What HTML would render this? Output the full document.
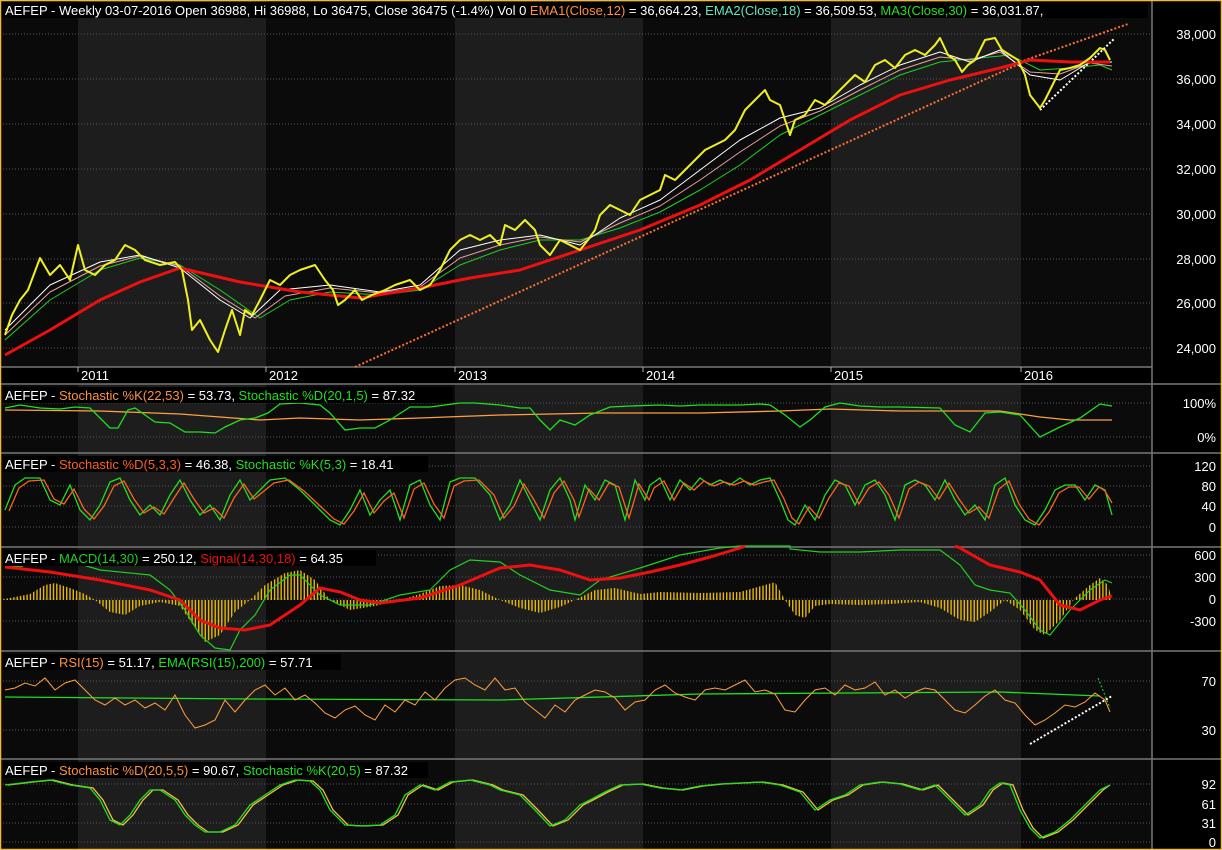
<!DOCTYPE html>
<html><head><meta charset="utf-8"><style>
html,body{margin:0;padding:0;background:#000;}
svg{display:block;font-family:"Liberation Sans",sans-serif;}
</style></head><body>
<svg width="1222" height="850" viewBox="0 0 1222 850" xmlns="http://www.w3.org/2000/svg">
<defs>
<pattern id="st" width="3.3" height="10" patternUnits="userSpaceOnUse"><rect x="0" y="0" width="1.4" height="10" fill="#e8b800"/></pattern>
<clipPath id="hc"><polygon points="0,600 10,598 30,594 45,585 55,583 70,588 85,594 95,600 110,612 125,615 140,606 160,602 180,606 195,628 205,642 220,635 235,612 250,600 265,585 285,573 300,570 315,580 330,600 350,610 375,606 400,600 420,594 440,586 460,585 480,590 500,600 520,608 540,613 560,607 575,600 595,590 615,588 640,594 660,592 700,593 740,592 765,585 775,582 785,600 795,615 805,618 815,606 830,604 860,605 890,604 920,602 940,608 960,620 975,622 990,612 1005,600 1020,610 1035,630 1045,635 1060,620 1075,598 1090,585 1100,578 1108,585 1112,600"/></clipPath>
</defs>
<rect width="1222" height="850" fill="#000"/>
<!-- year bands -->
<g>
<rect x="0" y="0" width="78" height="850" fill="#0a0a0a"/>
<rect x="78" y="0" width="188" height="850" fill="#1d1d1d"/>
<rect x="266" y="0" width="189" height="850" fill="#0b0b0b"/>
<rect x="455" y="0" width="188" height="850" fill="#1d1d1d"/>
<rect x="643" y="0" width="188" height="850" fill="#0b0b0b"/>
<rect x="831" y="0" width="190" height="850" fill="#1d1d1d"/>
<rect x="1021" y="0" width="131" height="850" fill="#0b0b0b"/>
<rect x="1152" y="0" width="70" height="850" fill="#000"/>
</g>
<!-- time axis row -->
<rect x="0" y="367" width="1152" height="17" fill="#000"/>
<!-- separators -->
<g stroke="#777" stroke-width="1.5">
<line x1="0" y1="367" x2="1152" y2="367"/>
<line x1="0" y1="384" x2="1222" y2="384"/>
<line x1="0" y1="453" x2="1222" y2="453"/>
<line x1="0" y1="547" x2="1222" y2="547"/>
<line x1="0" y1="651" x2="1222" y2="651"/>
<line x1="0" y1="759" x2="1222" y2="759"/>
<line x1="1152" y1="0" x2="1152" y2="850"/>
</g>
<!-- grid -->
<g stroke="#555" stroke-width="1" stroke-dasharray="1 2">
<line x1="0" y1="34" x2="1152" y2="34"/><line x1="0" y1="79" x2="1152" y2="79"/><line x1="0" y1="124" x2="1152" y2="124"/><line x1="0" y1="169" x2="1152" y2="169"/><line x1="0" y1="214" x2="1152" y2="214"/><line x1="0" y1="259" x2="1152" y2="259"/><line x1="0" y1="303" x2="1152" y2="303"/><line x1="0" y1="348" x2="1152" y2="348"/>
<line x1="0" y1="403" x2="1152" y2="403"/><line x1="0" y1="437" x2="1152" y2="437"/>
<line x1="0" y1="466" x2="1152" y2="466"/><line x1="0" y1="486" x2="1152" y2="486"/><line x1="0" y1="506" x2="1152" y2="506"/><line x1="0" y1="527" x2="1152" y2="527"/>
<line x1="0" y1="555" x2="1152" y2="555"/><line x1="0" y1="577" x2="1152" y2="577"/><line x1="0" y1="599" x2="1152" y2="599"/><line x1="0" y1="621" x2="1152" y2="621"/>
<line x1="0" y1="681" x2="1152" y2="681"/><line x1="0" y1="730" x2="1152" y2="730"/>
<line x1="0" y1="784" x2="1152" y2="784"/><line x1="0" y1="804" x2="1152" y2="804"/><line x1="0" y1="823" x2="1152" y2="823"/><line x1="0" y1="842" x2="1152" y2="842"/>
</g>
<!-- right axis labels -->
<g fill="#fff" font-size="13" text-anchor="end">
<text x="1216" y="39">38,000</text><text x="1216" y="84">36,000</text><text x="1216" y="129">34,000</text><text x="1216" y="174">32,000</text><text x="1216" y="219">30,000</text><text x="1216" y="264">28,000</text><text x="1216" y="308">26,000</text><text x="1216" y="353">24,000</text>
<text x="1216" y="408">100%</text><text x="1216" y="442">0%</text>
<text x="1216" y="471">120</text><text x="1216" y="491">80</text><text x="1216" y="511">40</text><text x="1216" y="532">0</text>
<text x="1216" y="560">600</text><text x="1216" y="582">300</text><text x="1216" y="604">0</text><text x="1216" y="626">-300</text>
<text x="1216" y="686">70</text><text x="1216" y="735">30</text>
<text x="1216" y="789">92</text><text x="1216" y="809">61</text><text x="1216" y="828">31</text><text x="1216" y="847">0</text>
</g>
<!-- year labels -->
<g fill="#fff" font-size="13">
<line x1="78" y1="367" x2="78" y2="372" stroke="#aaa"/><text x="81" y="380">2011</text>
<line x1="266" y1="367" x2="266" y2="372" stroke="#aaa"/><text x="269" y="380">2012</text>
<line x1="455" y1="367" x2="455" y2="372" stroke="#aaa"/><text x="458" y="380">2013</text>
<line x1="643" y1="367" x2="643" y2="372" stroke="#aaa"/><text x="646" y="380">2014</text>
<line x1="831" y1="367" x2="831" y2="372" stroke="#aaa"/><text x="834" y="380">2015</text>
<line x1="1021" y1="367" x2="1021" y2="372" stroke="#aaa"/><text x="1024" y="380">2016</text>
</g>
<!-- MAIN CHART -->
<g fill="none" stroke-linejoin="round">
<line x1="355" y1="367" x2="1032" y2="58" stroke="#ff7030" stroke-width="2" stroke-dasharray="2 2"/>
<line x1="1020" y1="62" x2="1128" y2="24" stroke="#ff7030" stroke-width="2" stroke-dasharray="2 2"/>
<line x1="1040" y1="110" x2="1115" y2="38" stroke="#fff" stroke-width="2" stroke-dasharray="2 2"/>
<polyline stroke="#20d020" stroke-width="1" points="5,340 50,300 100,270 140,258 180,265 220,290 260,318 290,300 330,292 380,295 420,290 460,265 500,250 540,240 580,240 620,228 660,212 700,190 740,165 780,135 820,115 860,95 900,75 940,62 980,58 1010,55 1040,70 1070,68 1100,65 1112,70"/>
<polyline stroke="#e8a0a0" stroke-width="1" points="5,335 50,292 100,266 140,256 180,266 220,296 255,318 285,296 330,288 380,293 420,287 460,258 500,245 540,237 580,242 620,223 660,206 700,180 740,152 780,126 820,111 860,90 900,70 940,57 970,60 1000,52 1030,72 1060,74 1090,63 1112,66"/>
<polyline stroke="#ffffff" stroke-width="1" points="5,330 50,285 100,262 140,255 180,268 220,300 250,318 280,290 330,285 380,292 420,285 460,250 500,240 540,235 580,245 620,218 660,200 700,170 740,140 780,118 820,108 860,85 900,65 940,52 970,62 1000,50 1030,75 1060,80 1090,62 1112,62"/>
<polyline stroke="#ee1010" stroke-width="3" points="5,355 50,330 100,300 140,282 180,268 240,282 300,292 360,298 420,288 470,278 520,270 580,250 640,230 700,205 750,180 800,150 850,120 900,95 950,80 1000,68 1030,60 1070,62 1110,62"/>
<polyline stroke="#f0f020" stroke-width="2" points="5,335 12,315 20,300 28,290 40,258 50,275 60,265 70,280 78,245 85,270 95,275 105,265 115,260 125,245 135,250 145,260 160,265 175,262 182,270 188,300 192,330 200,320 210,340 218,352 225,330 232,310 240,335 245,310 252,315 260,300 270,280 280,285 290,275 300,270 315,265 325,280 333,290 338,305 345,300 355,290 362,300 372,295 385,290 395,285 410,280 420,290 430,285 440,270 450,250 460,240 470,235 480,240 490,235 500,245 505,225 515,230 525,220 535,230 540,245 550,255 560,240 570,245 580,250 588,240 595,230 600,215 610,205 620,210 630,215 640,200 650,195 660,190 665,175 675,180 685,170 695,160 705,150 715,145 725,140 735,130 745,110 755,100 765,90 770,100 780,105 790,135 795,120 805,115 815,100 825,105 835,95 845,85 855,75 865,82 875,65 885,60 895,68 905,55 915,50 925,55 935,45 940,38 948,55 955,60 962,72 968,65 975,60 985,40 995,38 1002,50 1010,55 1018,60 1025,75 1030,95 1040,108 1045,100 1050,90 1060,70 1070,68 1080,65 1090,58 1100,48 1105,50 1110,60"/>
</g>
<!-- PANEL 1 -->
<g fill="none" stroke-width="1.3">
<polyline stroke="#ffa040" points="5,410 100,411 180,414 260,420 300,418 360,420 420,418 500,415 600,413 700,413 780,411 830,409 900,411 1000,411 1040,417 1070,420 1112,420"/>
<polyline stroke="#20e020" points="5,408 20,405 40,408 60,409 75,407 90,408 100,418 110,428 118,428 128,410 135,408 145,415 155,422 170,423 185,432 200,432 215,433 225,427 240,420 255,418 268,413 280,404 300,403 320,405 330,413 345,430 360,428 375,428 390,420 410,407 430,407 445,405 460,403 475,403 500,405 520,408 530,408 540,420 550,430 560,420 575,425 590,415 610,407 630,406 660,405 680,406 700,405 740,405 760,404 770,405 785,415 800,427 810,420 825,407 840,403 860,406 880,407 900,407 940,408 955,425 970,432 985,413 1000,412 1020,415 1040,437 1060,427 1080,418 1100,404 1112,406"/>
</g>
<!-- PANEL 2 -->
<g fill="none" stroke-width="1.3">
<polyline id="p2" stroke="#20e020" points="5,510 15,485 25,478 40,478 50,500 60,505 70,485 80,510 90,520 100,505 110,482 120,478 130,500 140,515 150,505 160,515 170,495 180,480 190,500 200,515 210,505 220,520 230,495 240,480 250,500 260,490 270,480 285,478 300,490 315,505 330,520 340,525 350,510 360,490 370,515 380,500 390,490 400,520 410,485 420,480 430,505 440,520 450,482 460,478 475,478 490,495 500,520 510,505 520,480 530,500 540,520 550,490 560,478 570,500 575,520 585,485 595,500 605,480 615,485 625,520 635,480 645,500 650,485 660,478 670,500 680,480 690,490 700,478 710,485 720,480 730,485 740,478 750,485 760,480 770,478 780,500 788,520 795,525 805,505 815,520 825,495 835,480 845,485 855,505 865,485 875,480 885,495 895,520 905,485 915,480 925,485 935,500 945,480 955,500 965,515 975,505 985,520 995,485 1005,478 1015,505 1025,520 1035,525 1045,510 1055,490 1065,485 1075,485 1085,500 1095,485 1105,490 1112,515"/>
<polyline stroke="#ff6020" transform="translate(4,1)" points="5,510 15,487 25,480 40,479 50,498 60,503 70,488 80,508 90,518 100,505 110,485 120,480 130,498 140,512 150,506 160,513 170,497 180,482 190,498 200,512 210,507 220,517 230,497 240,483 250,498 260,490 270,482 285,479 300,490 315,504 330,518 340,523 350,510 360,492 370,512 380,500 390,492 400,517 410,488 420,482 430,503 440,517 450,485 460,480 475,479 490,494 500,517 510,505 520,483 530,499 540,517 550,492 560,480 570,499 575,516 585,488 595,499 605,482 615,486 625,517 635,483 645,499 650,487 660,480 670,499 680,482 690,489 700,480 710,485 720,481 730,484 740,480 750,484 760,481 770,479 780,498 788,517 795,523 805,506 815,517 825,497 835,482 845,485 855,503 865,487 875,481 885,494 895,517 905,488 915,481 925,485 935,498 945,482 955,498 965,512 975,506 985,517 995,488 1005,480 1015,503 1025,518 1035,524 1045,511 1055,492 1065,486 1075,486 1085,498 1095,486 1101,490 1108,502"/>
</g>
<!-- PANEL 3 MACD -->
<rect x="0" y="548" width="1115" height="102" fill="url(#st)" clip-path="url(#hc)"/>
<g fill="none">
<polyline stroke="#20d020" stroke-width="1.2" points="5,565 20,567 50,555 100,570 150,575 170,590 185,610 200,635 215,648 230,650 240,630 255,615 270,590 290,575 300,575 320,595 340,605 370,605 400,595 430,590 450,570 470,560 500,562 520,575 550,590 580,595 600,580 640,568 680,555 720,548 740,546 790,546 790,549 820,552 860,552 900,550 940,550 960,565 975,585 990,590 1010,593 1025,610 1040,630 1050,635 1070,610 1090,590 1105,580 1112,583"/>
<polyline stroke="#ee1010" stroke-width="3" points="5,567 50,572 100,580 150,590 180,600 200,620 220,628 245,630 270,625 300,605 320,588 340,592 360,600 380,603 420,598 460,585 500,568 530,565 560,570 590,580 620,578 650,572 680,565 710,557 740,548 745,546"/>
<polyline stroke="#ee1010" stroke-width="3" points="955,546 960,548 990,565 1020,572 1040,580 1060,605 1080,610 1100,600 1112,596"/>
</g>
<!-- PANEL 4 RSI -->
<g fill="none">
<polyline stroke="#20e020" stroke-width="1.3" points="5,697 250,699 500,700 700,694 1000,692 1100,696"/>
<polyline stroke="#ffa040" stroke-width="1" points="5,690 15,688 25,683 35,686 45,678 55,690 65,683 75,680 85,690 95,700 105,705 115,698 125,705 135,700 145,708 155,703 165,710 175,695 185,715 195,728 205,725 215,720 225,700 235,712 245,700 255,690 265,685 275,695 285,688 295,700 305,695 315,703 325,713 335,718 345,710 355,706 365,715 375,720 385,705 395,712 405,700 415,705 425,692 435,700 445,688 455,680 465,678 475,685 485,690 495,678 505,690 515,688 525,702 535,710 545,718 555,705 565,712 575,700 585,695 595,690 605,692 615,698 625,710 635,702 645,700 655,690 665,685 675,693 685,697 695,700 705,690 715,688 725,690 735,685 745,680 755,692 765,690 775,694 785,710 795,712 805,700 815,690 825,688 835,695 845,685 855,690 865,688 875,682 885,695 895,690 905,698 915,692 925,688 935,690 945,700 955,710 965,713 975,705 985,696 995,690 1005,700 1015,703 1025,715 1035,725 1045,720 1055,713 1065,705 1075,707 1085,702 1095,693 1105,700 1110,712"/>
<line x1="1030" y1="744" x2="1112" y2="696" stroke="#fff" stroke-width="2" stroke-dasharray="2 2"/>
<line x1="1098" y1="678" x2="1110" y2="708" stroke="#20e020" stroke-width="1" stroke-dasharray="2 2"/>
</g>
<!-- PANEL 5 -->
<g fill="none" stroke-width="1.3">
<polyline stroke="#f0c040" transform="translate(3,0)" points="5,785 30,782 50,780 70,785 90,788 100,800 110,820 120,825 130,815 140,800 150,790 160,790 175,800 185,815 195,825 205,832 220,832 235,825 250,805 265,795 280,785 295,780 310,781 320,790 330,810 345,825 360,826 380,825 395,815 405,795 420,785 435,790 450,782 470,780 490,785 500,790 520,795 535,810 550,826 565,820 580,805 590,800 605,792 620,785 640,784 660,788 680,790 700,786 720,784 740,783 760,782 780,785 800,792 815,810 830,800 845,795 860,785 880,782 900,784 920,790 935,785 950,800 965,815 980,805 990,790 1000,783 1010,785 1020,810 1030,828 1040,838 1055,832 1070,820 1090,800 1100,790 1107,785"/>
<polyline stroke="#20e020" points="5,785 30,782 50,780 70,785 90,788 100,800 110,820 120,825 130,815 140,800 150,790 160,790 175,800 185,815 195,825 205,832 220,832 235,825 250,805 265,795 280,785 295,780 310,781 320,790 330,810 345,825 360,826 380,825 395,815 405,795 420,785 435,790 450,782 470,780 490,785 500,790 520,795 535,810 550,826 565,820 580,805 590,800 605,792 620,785 640,784 660,788 680,790 700,786 720,784 740,783 760,782 780,785 800,792 815,810 830,800 845,795 860,785 880,782 900,784 920,790 935,785 950,800 965,815 980,805 990,790 1000,783 1010,785 1020,810 1030,828 1040,838 1055,832 1070,820 1090,800 1100,790 1110,785"/>
</g>
<!-- labels -->
<g font-size="13">
<rect x="0" y="2" width="1148" height="16" fill="#000"/>
<text x="5" y="15" fill="#fff">AEFEP - Weekly 03-07-2016 Open 36988, Hi 36988, Lo 36475, Close 36475 (-1.4%) Vol 0 <tspan fill="#ff9040">EMA1(Close,12)</tspan> = 36,664.23, <tspan fill="#60e8c8">EMA2(Close,18)</tspan> = 36,509.53, <tspan fill="#20e020">MA3(Close,30)</tspan> = 36,031.87,</text>
<rect x="3" y="387" width="450" height="16" fill="#000"/>
<text x="5" y="400" fill="#fff">AEFEP - <tspan fill="#ff9040">Stochastic %K(22,53)</tspan> = 53.73, <tspan fill="#20e020">Stochastic %D(20,1,5)</tspan> = 87.32</text>
<rect x="3" y="456" width="425" height="16" fill="#000"/>
<text x="5" y="469" fill="#fff">AEFEP - <tspan fill="#ff6020">Stochastic %D(5,3,3)</tspan> = 46.38, <tspan fill="#20e020">Stochastic %K(5,3)</tspan> = 18.41</text>
<rect x="3" y="550" width="373" height="16" fill="#000"/>
<text x="5" y="563" fill="#fff">AEFEP - <tspan fill="#20d020">MACD(14,30)</tspan> = 250.12, <tspan fill="#ee1010">Signal(14,30,18)</tspan> = 64.35</text>
<rect x="3" y="654" width="338" height="16" fill="#000"/>
<text x="5" y="667" fill="#fff">AEFEP - <tspan fill="#ff9040">RSI(15)</tspan> = 51.17, <tspan fill="#20e020">EMA(RSI(15),200)</tspan> = 57.71</text>
<rect x="3" y="762" width="425" height="16" fill="#000"/>
<text x="5" y="775" fill="#fff">AEFEP - <tspan fill="#ff9040">Stochastic %D(20,5,5)</tspan> = 90.67, <tspan fill="#20e020">Stochastic %K(20,5)</tspan> = 87.32</text>
</g>
<rect x="0.5" y="0.5" width="1221" height="849" fill="none" stroke="#f0b840" stroke-width="1.5"/>
</svg>
</body></html>
